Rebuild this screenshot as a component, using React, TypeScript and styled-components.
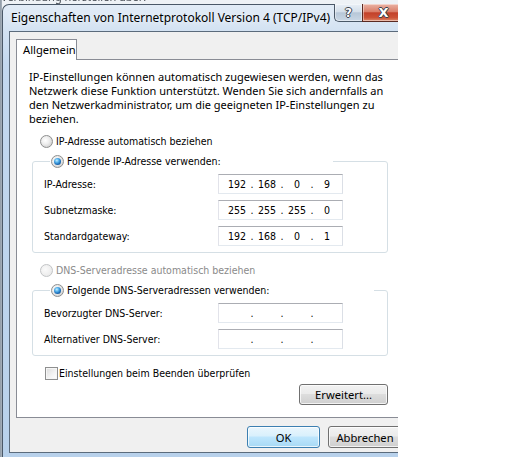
import styled, { createGlobalStyle } from 'styled-components'

const uiFont = `"Noto Sans", "Open Sans", sans-serif`
const dlgFont = `"DejaVu Sans", Verdana, sans-serif`

const GlobalStyle = createGlobalStyle`
  html, body {
    margin: 0;
    padding: 0;
    background: #fff;
  }
  body {
    font-family: ${uiFont};
    font-size: 12px;
    color: #000;
  }
  * {
    box-sizing: border-box;
  }
`

const Screen = styled.div`
  width: 529px;
  height: 457px;
  display: flex;
  overflow: hidden;
  background: #fff;
`

// the desktop strip the dialog sits on, cut at its right edge
const Desktop = styled.div`
  width: 398px;
  height: 457px;
  flex: none;
  overflow: hidden;
  display: flex;
  flex-direction: column;
  background: linear-gradient(90deg, #8e99a5 0, #a9b3bd 2px, #eef2f6 2px);
`

const BehindStrip = styled.div`
  height: 4px;
  flex: none;
  overflow: hidden;
  padding-left: 1px;
`

const BehindText = styled.div`
  margin-top: -10px;
  font-size: 11px;
  line-height: 14px;
  color: #4a5058;
  filter: blur(0.4px);
  white-space: nowrap;
`

const Window = styled.div`
  width: 414px;
  flex: 1;
  margin-left: 2px;
  display: flex;
  flex-direction: column;
  padding: 0 6px 4px 6px;
  border: 1px solid transparent;
  border-top-color: #4a5868;
  border-left-color: #4a5868;
  border-radius: 7px 7px 0 0;
  background: linear-gradient(180deg, #e2ecf7 0, #d3e2f2 26px, #c3d8ef 60px, #b8d1eb 100%);
`

const TitleBar = styled.div`
  height: 26px;
  flex: none;
  display: flex;
  align-items: flex-start;
`

const TitleText = styled.div`
  flex: 1;
  margin: 5px 0 0 2px;
  font-family: ${uiFont};
  font-size: 12px;
  line-height: 15px;
  white-space: nowrap;
  color: #000;
  text-shadow: 0 0 6px rgba(255, 255, 255, 0.9);
`

const CaptionGroup = styled.div`
  display: flex;
  margin: -1px 4px 0 0;
`

const CaptionButton = styled.div<{ $kind: 'help' | 'close' }>`
  height: 18px;
  width: ${(p) => (p.$kind === 'help' ? 28 : 43)}px;
  display: flex;
  align-items: center;
  justify-content: center;
  border: 1px solid ${(p) => (p.$kind === 'help' ? '#4a5867' : '#5a2a22')};
  border-top: none;
  ${(p) => (p.$kind === 'help' ? 'border-right: none;' : '')}
  border-radius: ${(p) => (p.$kind === 'help' ? '0 0 0 5px' : '0 0 5px 0')};
  background: ${(p) =>
    p.$kind === 'help'
      ? 'linear-gradient(180deg, #e9eff6 0%, #d4dfea 45%, #b7c7d8 52%, #c9d7e5 100%)'
      : 'linear-gradient(180deg, #eab3a5 0%, #da7e69 45%, #c3412a 52%, #cc5236 80%, #de8b6c 100%)'};
  box-shadow: inset 0 0 0 1px rgba(255, 255, 255, 0.45);
  font-family: "DejaVu Sans", sans-serif;
  font-weight: bold;
  font-size: ${(p) => (p.$kind === 'help' ? 12 : 13)}px;
  color: #fff;
  text-shadow: -1px 0 #39424d, 1px 0 #39424d, 0 -1px #39424d, 0 1px #39424d;
`

const Client = styled.div`
  flex: 1;
  display: flex;
  flex-direction: column;
  border: 1px solid #5b6b7c;
  background: #f0f0f0;
  padding-bottom: 4px;
`

const TabStrip = styled.div`
  display: flex;
  padding: 7px 6px 0;
`

const Tab = styled.div`
  position: relative;
  z-index: 1;
  width: 61px;
  height: 21px;
  margin-bottom: -1px;
  padding-left: 6px;
  border: 1px solid #898c95;
  border-bottom: none;
  background: #fff;
  font-family: ${uiFont};
  font-size: 11.2px;
  line-height: 19px;
`

const Panel = styled.div`
  height: 359px;
  margin: 0 6px;
  border: 1px solid #898c95;
  background: #fff;
  display: flex;
  flex-direction: column;
`

const Intro = styled.p`
  margin: 0;
  padding: 10px 12px 0;
  font-family: ${uiFont};
  font-size: 11px;
  line-height: 14px;
  white-space: nowrap;
`

const OptionRow = styled.label<{ $top: number }>`
  display: flex;
  align-items: center;
  gap: 3px;
  height: 15px;
  margin: ${(p) => p.$top}px 0 0 23px;
`

const Radio = styled.span<{ $checked?: boolean; $disabled?: boolean }>`
  position: relative;
  flex: none;
  width: 13px;
  height: 13px;
  border-radius: 50%;
  border: 1px solid ${(p) => (p.$disabled ? '#c2c4c6' : '#8e8f8f')};
  background: ${(p) =>
    p.$disabled
      ? 'radial-gradient(circle at 40% 40%, #fafafa 0, #f0f0f0 50%, #e4e4e4 100%)'
      : 'radial-gradient(circle at 40% 40%, #ffffff 0, #eeeeee 40%, #d0d0d0 80%, #e2e2e2 100%)'};

  &::after {
    content: '';
    display: ${(p) => (p.$checked ? 'block' : 'none')};
    position: absolute;
    inset: 2px;
    border-radius: 50%;
    background: radial-gradient(circle at 40% 35%, #c8eeff 0, #5ab6ee 30%, #1d6fba 62%, #0d3a6e 100%);
  }
`

const OptionText = styled.span<{ $disabled?: boolean }>`
  font-family: ${dlgFont};
  font-stretch: condensed;
  font-size: 10.5px;
  line-height: 15px;
  white-space: nowrap;
  color: ${(p) => (p.$disabled ? '#8a8a8a' : '#000')};
`

const Group = styled.fieldset<{ $top: number }>`
  width: 356px;
  margin: ${(p) => p.$top}px 0 0 15px;
  padding: 5px 0 6px 11px;
  border: 1px solid #d5dfe5;
  border-radius: 3px;
  display: flex;
  flex-direction: column;
  gap: 6px;
`

// the legend control is wider than its caption, so the frame line resumes well after the text
const GroupLegend = styled.legend<{ $w: number }>`
  width: ${(p) => p.$w}px;
  margin-left: 6px;
  padding: 0 0 0 1px;
  display: flex;
  align-items: center;
  gap: 3px;
  height: 15px;
`

const FieldRow = styled.div`
  display: flex;
  align-items: center;
  height: 20px;
`

const FieldLabel = styled.span`
  width: 174px;
  flex: none;
  font-family: ${dlgFont};
  font-stretch: condensed;
  font-size: 10.5px;
  white-space: nowrap;
`

const IpBox = styled.div`
  width: 125px;
  height: 20px;
  display: flex;
  align-items: center;
  padding-left: 6px;
  border: 1px solid #e3e9ef;
  border-top-color: #abadb3;
  border-left-color: #e2e3ea;
  border-right-color: #dbdfe6;
  background: #fff;
  font-family: ${dlgFont};
  font-stretch: condensed;
  font-size: 10.5px;
  line-height: 18px;
`

const Octet = styled.span`
  width: 24px;
  text-align: center;
`

const Dot = styled.span`
  width: 6px;
  text-align: center;
`

const CheckRow = styled.label`
  display: flex;
  align-items: center;
  gap: 1px;
  height: 15px;
  margin: 10px 0 0 28px;
`

const CheckBox = styled.span`
  flex: none;
  width: 13px;
  height: 13px;
  border: 1px solid #8e8f8f;
  background: linear-gradient(135deg, #dcdcdc 0, #f4f4f4 60%, #ffffff 100%);
  box-shadow: inset 0 0 0 1px #f6f6f6;
`

const AdvancedRow = styled.div`
  width: 356px;
  margin: 3px 0 0 15px;
  display: flex;
  justify-content: flex-end;
`

const PushButton = styled.button<{ $default?: boolean; $w: number; $h?: number }>`
  width: ${(p) => p.$w}px;
  height: ${(p) => p.$h ?? 22}px;
  padding: 0;
  font-family: ${uiFont};
  font-size: 11.2px;
  color: #000;
  border: 1px solid ${(p) => (p.$default ? '#3c7fb1' : '#707070')};
  border-radius: 3px;
  background: ${(p) =>
    p.$default
      ? 'linear-gradient(180deg, #eaf6fd 0%, #d9f0fc 45%, #bee6fd 50%, #a7d9f5 100%)'
      : 'linear-gradient(180deg, #f2f2f2 0%, #ebebeb 45%, #dddddd 50%, #cfcfcf 100%)'};
  box-shadow: inset 0 0 0 1px rgba(255, 255, 255, 0.75);
`

const DialogButtons = styled.div`
  margin-top: 8px;
  padding-right: 6px;
  display: flex;
  justify-content: flex-end;
  gap: 8px;
`

const Filler = styled.div`
  flex: 1;
  background: #fff;
`

type Address = string[]

const IpField = ({ parts }: { parts: Address }) => (
  <IpBox>
    {parts.map((p, i) => (
      <span key={i} style={{ display: 'contents' }}>
        {i > 0 && <Dot>.</Dot>}
        <Octet>{p}</Octet>
      </span>
    ))}
  </IpBox>
)

const ipRows: { label: string; parts: Address }[] = [
  { label: 'IP-Adresse:', parts: ['192', '168', '0', '9'] },
  { label: 'Subnetzmaske:', parts: ['255', '255', '255', '0'] },
  { label: 'Standardgateway:', parts: ['192', '168', '0', '1'] },
]

const dnsRows: { label: string; parts: Address }[] = [
  { label: 'Bevorzugter DNS-Server:', parts: ['', '', '', ''] },
  { label: 'Alternativer DNS-Server:', parts: ['', '', '', ''] },
]

export default function App() {
  return (
    <Screen>
      <GlobalStyle />
      <Desktop>
        <BehindStrip>
          <BehindText>Verbindung herstellen über:</BehindText>
        </BehindStrip>
        <Window>
          <TitleBar>
            <TitleText>Eigenschaften von Internetprotokoll Version 4 (TCP/IPv4)</TitleText>
            <CaptionGroup>
              <CaptionButton $kind="help">?</CaptionButton>
              <CaptionButton $kind="close">X</CaptionButton>
            </CaptionGroup>
          </TitleBar>
          <Client>
            <TabStrip>
              <Tab>Allgemein</Tab>
            </TabStrip>
            <Panel>
              <Intro>
                IP-Einstellungen können automatisch zugewiesen werden, wenn das
                <br />
                Netzwerk diese Funktion unterstützt. Wenden Sie sich andernfalls an
                <br />
                den Netzwerkadministrator, um die geeigneten IP-Einstellungen zu
                <br />
                beziehen.
              </Intro>

              <OptionRow $top={8}>
                <Radio />
                <OptionText>IP-Adresse automatisch beziehen</OptionText>
              </OptionRow>

              <Group $top={5}>
                <GroupLegend $w={283}>
                  <Radio $checked />
                  <OptionText>Folgende IP-Adresse verwenden:</OptionText>
                </GroupLegend>
                {ipRows.map((r) => (
                  <FieldRow key={r.label}>
                    <FieldLabel>{r.label}</FieldLabel>
                    <IpField parts={r.parts} />
                  </FieldRow>
                ))}
              </Group>

              <OptionRow $top={10}>
                <Radio $disabled />
                <OptionText $disabled>DNS-Serveradresse automatisch beziehen</OptionText>
              </OptionRow>

              <Group $top={5}>
                <GroupLegend $w={324}>
                  <Radio $checked />
                  <OptionText>Folgende DNS-Serveradressen verwenden:</OptionText>
                </GroupLegend>
                {dnsRows.map((r) => (
                  <FieldRow key={r.label}>
                    <FieldLabel>{r.label}</FieldLabel>
                    <IpField parts={r.parts} />
                  </FieldRow>
                ))}
              </Group>

              <CheckRow>
                <CheckBox />
                <OptionText>Einstellungen beim Beenden überprüfen</OptionText>
              </CheckRow>

              <AdvancedRow>
                <PushButton $w={89} $h={21}>
                  Erweitert...
                </PushButton>
              </AdvancedRow>
            </Panel>
            <DialogButtons>
              <PushButton $default $w={73}>
                OK
              </PushButton>
              <PushButton $w={74}>Abbrechen</PushButton>
            </DialogButtons>
          </Client>
        </Window>
      </Desktop>
      <Filler />
    </Screen>
  )
}
